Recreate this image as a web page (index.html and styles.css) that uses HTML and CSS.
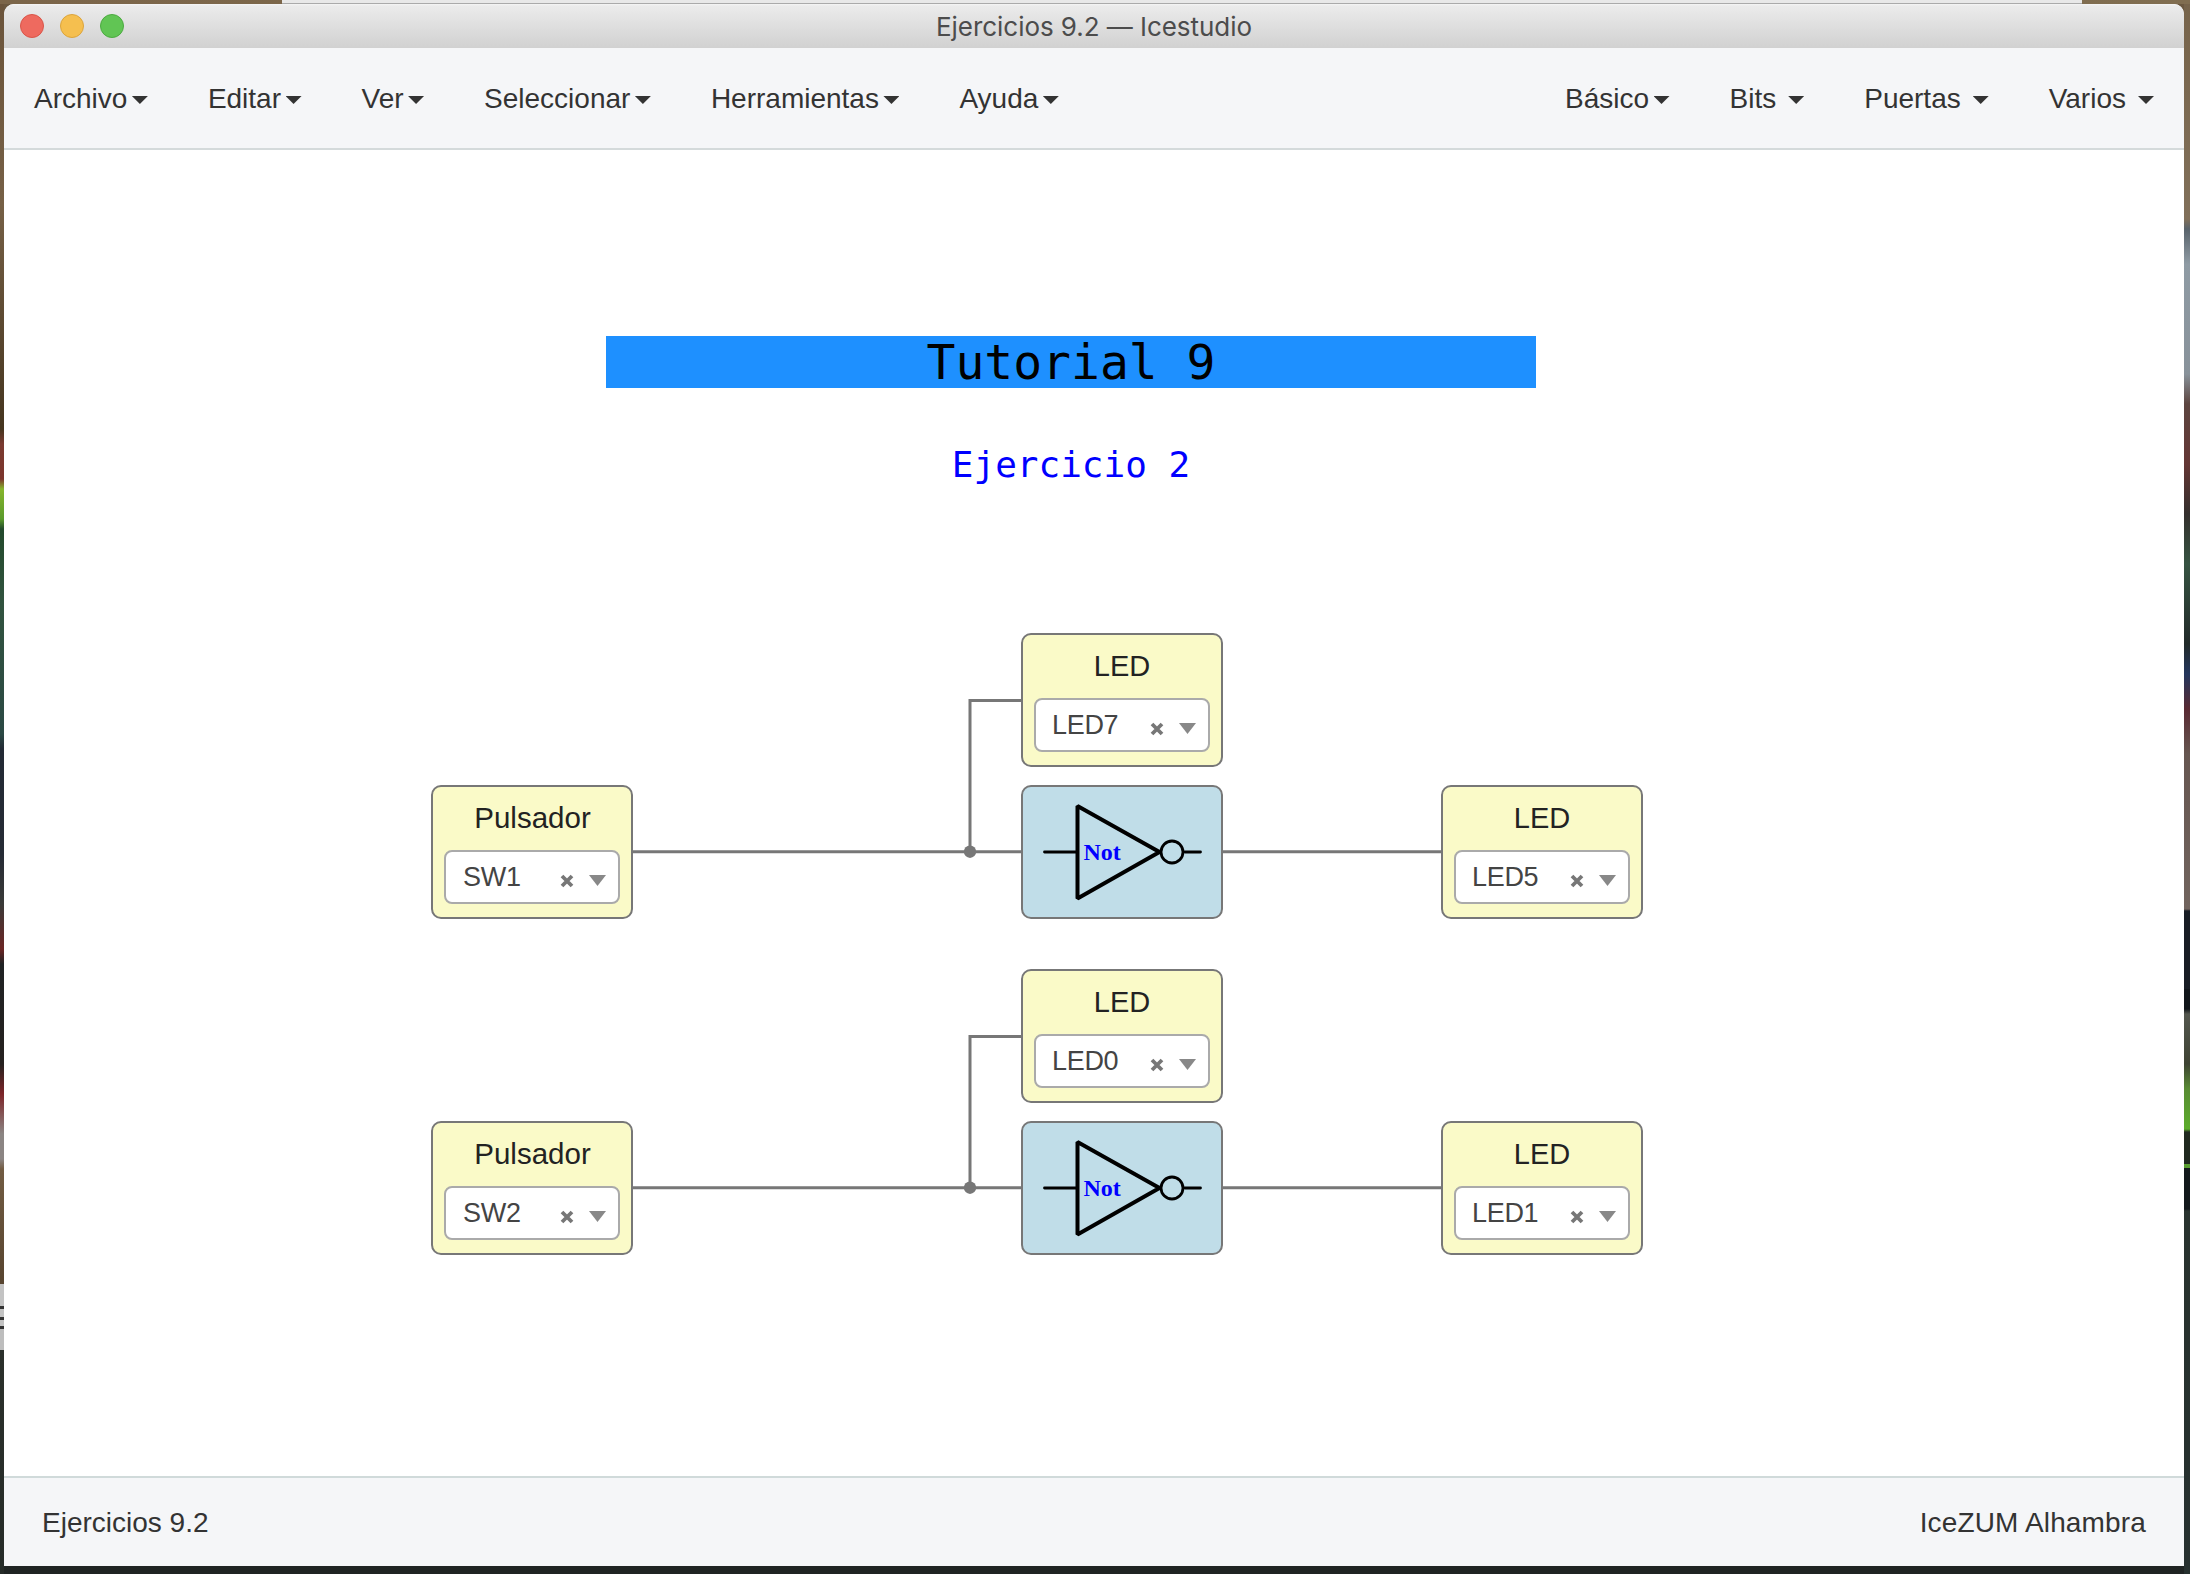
FILE: index.html
```
<!DOCTYPE html>
<html lang="es">
<head>
<meta charset="utf-8">
<title>Ejercicios 9.2 — Icestudio</title>
<link rel="stylesheet" href="styles.css">
</head>
<body>
<svg width="0" height="0" class="defs">
  <symbol id="clear" viewBox="0 0 14 14"><path d="M2 2L12 12M12 2L2 12" stroke="#777" stroke-width="3.8" fill="none"/></symbol>
  <symbol id="not" viewBox="0 0 198 130">
    <g fill="none" stroke="#000" stroke-linecap="round" stroke-linejoin="round">
      <path d="M21.500 65H53M162 65H177.500" stroke-width="2.8"/>
      <path d="M54.500 19V111.500L136.500 65Z" stroke-width="4" stroke-linejoin="miter" stroke-miterlimit="1.500"/>
      <circle cx="149" cy="65" r="11" stroke-width="2.800"/>
    </g>
    <text x="60.500" y="72.500" class="gate-label">Not</text>
  </symbol>
</svg>
<div class="desktop">
  <div class="desktop-top"></div>
  <div class="desktop-left"></div>
  <main class="window">
    <header class="titlebar">
      <div class="lights"><i class="light red"></i><i class="light yellow"></i><i class="light green"></i></div>
      <span class="title">Ejercicios 9.2 — Icestudio</span>
    </header>
    <nav class="navbar">
      <ul class="menu">
        <li>Archivo<i class="caret"></i></li>
        <li>Editar<i class="caret"></i></li>
        <li>Ver<i class="caret"></i></li>
        <li>Seleccionar<i class="caret"></i></li>
        <li>Herramientas<i class="caret"></i></li>
        <li>Ayuda<i class="caret"></i></li>
      </ul>
      <ul class="menu">
        <li>Básico<i class="caret"></i></li>
        <li class="spaced">Bits<i class="caret"></i></li>
        <li class="spaced">Puertas<i class="caret"></i></li>
        <li class="spaced">Varios<i class="caret"></i></li>
      </ul>
    </nav>
    <section class="canvas">
      <h1 class="info-title">Tutorial 9</h1>
      <h2 class="info-sub">Ejercicio 2</h2>
      <svg class="wires" viewBox="0 0 2180 1326">
        <g id="net" fill="none" stroke="#777" stroke-width="3">
          <path d="M628 701.700H1019M1218 701.700H1439M966 701.700V550.500H1019"/>
          <circle cx="966" cy="701.700" r="6.200" fill="#777" stroke="none"/>
        </g>
        <use href="#net" y="336"/>
      </svg>

      <div class="block io tap row1"><b>LED</b><div class="select"><span>LED7</span><svg class="clear"><use href="#clear"/></svg><i class="arrow"></i></div></div>
      <div class="block io input row2"><b>Pulsador</b><div class="select"><span>SW1</span><svg class="clear"><use href="#clear"/></svg><i class="arrow"></i></div></div>
      <div class="block gate row2"><svg><use href="#not"/></svg></div>
      <div class="block io output row2"><b>LED</b><div class="select"><span>LED5</span><svg class="clear"><use href="#clear"/></svg><i class="arrow"></i></div></div>

      <div class="block io tap row3"><b>LED</b><div class="select"><span>LED0</span><svg class="clear"><use href="#clear"/></svg><i class="arrow"></i></div></div>
      <div class="block io input row4"><b>Pulsador</b><div class="select"><span>SW2</span><svg class="clear"><use href="#clear"/></svg><i class="arrow"></i></div></div>
      <div class="block gate row4"><svg><use href="#not"/></svg></div>
      <div class="block io output row4"><b>LED</b><div class="select"><span>LED1</span><svg class="clear"><use href="#clear"/></svg><i class="arrow"></i></div></div>
    </section>
    <footer class="footer"><span>Ejercicios 9.2</span><span class="board">IceZUM Alhambra</span></footer>
  </main>
  <div class="desktop-right"></div>
</div>
</body>
</html>
```
FILE: styles.css
```
* { box-sizing: border-box; }
body { margin: 0; font: 28px/40px "Liberation Sans", Arial, sans-serif; color: #333; overflow: hidden; }
.defs { position: absolute; }
.desktop {
  width: 2190px; height: 1574px; background: linear-gradient(#6b5840 0 30px, #1f2423 30px);
  display: grid; grid-template-columns: 4px 2180px 6px; grid-template-rows: 4px 1562px 8px;
}
.desktop-top {
  grid-column: 1 / -1; grid-row: 1;
  background: linear-gradient(#e8e8e8 0 3px, #aaa 3px) 282px 0 / 1800px 4px no-repeat, linear-gradient(90deg, #7b6549, #806d50);
}
.desktop-left {
  grid-column: 1; grid-row: 2 / 4;
  background: linear-gradient(#6b543b 0, #766046 200px, #45351f 425px, #7a3a30 440px, #7c352c 475px, #86b52c 485px, #5a9a2b 515px, #234a2c 525px, #31533f 600px, #2b4944 730px, #232a35 745px, #252b35 850px, #3a3a38 900px, #6b2524 945px, #202224 960px, #25211f 1060px, #7d2529 1090px, #8b8583 1130px, #8b8583 1155px, #725c43 1165px, #57442f 1280px, #c3c3c3 1280px 1302px, #333 1302px 1305px, #c3c3c3 1305px 1313px, #333 1313px 1316px, #c3c3c3 1316px 1322px, #333 1322px 1325px, #bdbdbd 1325px 1346px, #2b302b 1346px, #252b28 100%);
}
.desktop-right {
  grid-column: 3; grid-row: 2 / 4;
  background: linear-gradient(#76634a 0, #81705a 215px, #59636b 225px, #8f9ba4 260px, #88929a 370px, #5c4540 400px, #643634 460px, #342f2d 510px, #365342 560px, #222a29 640px, #24365d 670px, #592a33 705px, #665650 750px, #71645e 905px, #181d24 907px 985px, #11161a 985px 1005px, #53564e 1010px, #3e4333 1060px, #598c34 1085px, #5cad2b 1125px, #20291f 1128px 1160px, #599d31 1160px 1164px, #13191c 1164px 1205px, #29332f 1207px, #26302f 100%);
}
.window {
  grid-column: 2; grid-row: 2;
  display: grid; grid-template-rows: 44px 102px 1326px 90px;
  background: #fff; border-radius: 10px 10px 0 0; overflow: hidden;
}
.titlebar {
  display: grid; grid-template-columns: 1fr auto 1fr; align-items: center;
  background: linear-gradient(#f5f5f5 0, #ebebeb 2px, #d1d1d1 100%);
}
.lights { display: flex; gap: 16px; padding-left: 16px; }
.light { width: 24px; height: 24px; border-radius: 50%; border: 1px solid; }
.red { background: #ee6a5f; border-color: #d95549; }
.yellow { background: #f5bf4f; border-color: #dba43c; }
.green { background: #61c554; border-color: #4caa40; }
.title { font: 26px/40px Inter, sans-serif; color: #4c4c4c; letter-spacing: -.05px; padding-top: 1px; }
.navbar {
  display: flex; justify-content: space-between; padding: 31px 30px 0;
  background: #f5f6f8; border-bottom: 2px solid #d4dadb;
}
.menu { display: flex; gap: 60px; margin: 0; padding: 0; list-style: none; }
.menu li { display: flex; }
.caret { width: 16px; height: 8px; margin: 17px 0 0 4.5px; background: #333; clip-path: polygon(0 0, 100% 0, 50% 100%); }
.spaced .caret { margin-left: 12px; }
.canvas { position: relative; background: #fff; }
.info-title, .info-sub {
  position: absolute; left: 602px; width: 930px; margin: 0;
  font-family: "DejaVu Sans Mono", monospace; font-weight: 400; text-align: center;
}
.info-title { top: 186px; height: 52px; font-size: 48px; line-height: 53px; color: #000; background: #1e90ff; }
.info-sub { top: 294px; font-size: 36px; line-height: 42px; color: #00f; }
.wires { position: absolute; left: 0; top: 0; width: 2180px; height: 1326px; }
.block { position: absolute; width: 202px; height: 134px; border: 2px solid #777; border-radius: 10px; }
.input { left: 427px; }
.tap, .gate { left: 1017px; }
.output { left: 1437px; }
.row1 { top: 483px; }
.row2 { top: 635px; }
.row3 { top: 819px; }
.row4 { top: 971px; }
.io { display: flex; flex-direction: column; padding: 11px 11px 0; background: #fafac8; }
.io b { height: 52px; font-weight: 400; font-size: 29px; color: #222; text-align: center; }
.input b { font-size: 29.5px; padding-left: 1px; }
.select {
  display: flex; align-items: flex-start; height: 54px; padding: 6px 12px 0 16px;
  border: 2px solid #aaa; border-radius: 8px; background: #fff;
}
.select span { font-size: 27px; line-height: 38px; color: #444; flex: 1; letter-spacing: -.3px; }
.input .select span { padding-left: 1px; }
.clear { width: 14px; height: 14px; margin: 16px 15px 0 0; }
.arrow { width: 17px; height: 11px; margin-top: 17px; background: #888; clip-path: polygon(0 0, 100% 0, 50% 100%); }
.gate { background: #c0dde8; }
.gate svg { display: block; width: 198px; height: 130px; }
.gate-label { font: bold 24px "Liberation Serif", serif; fill: #00f; }
.footer {
  display: flex; justify-content: space-between; padding: 25px 38px 0;
  background: #f5f6f8; border-top: 2px solid #d0dada;
}
.board { letter-spacing: .15px; }
```
